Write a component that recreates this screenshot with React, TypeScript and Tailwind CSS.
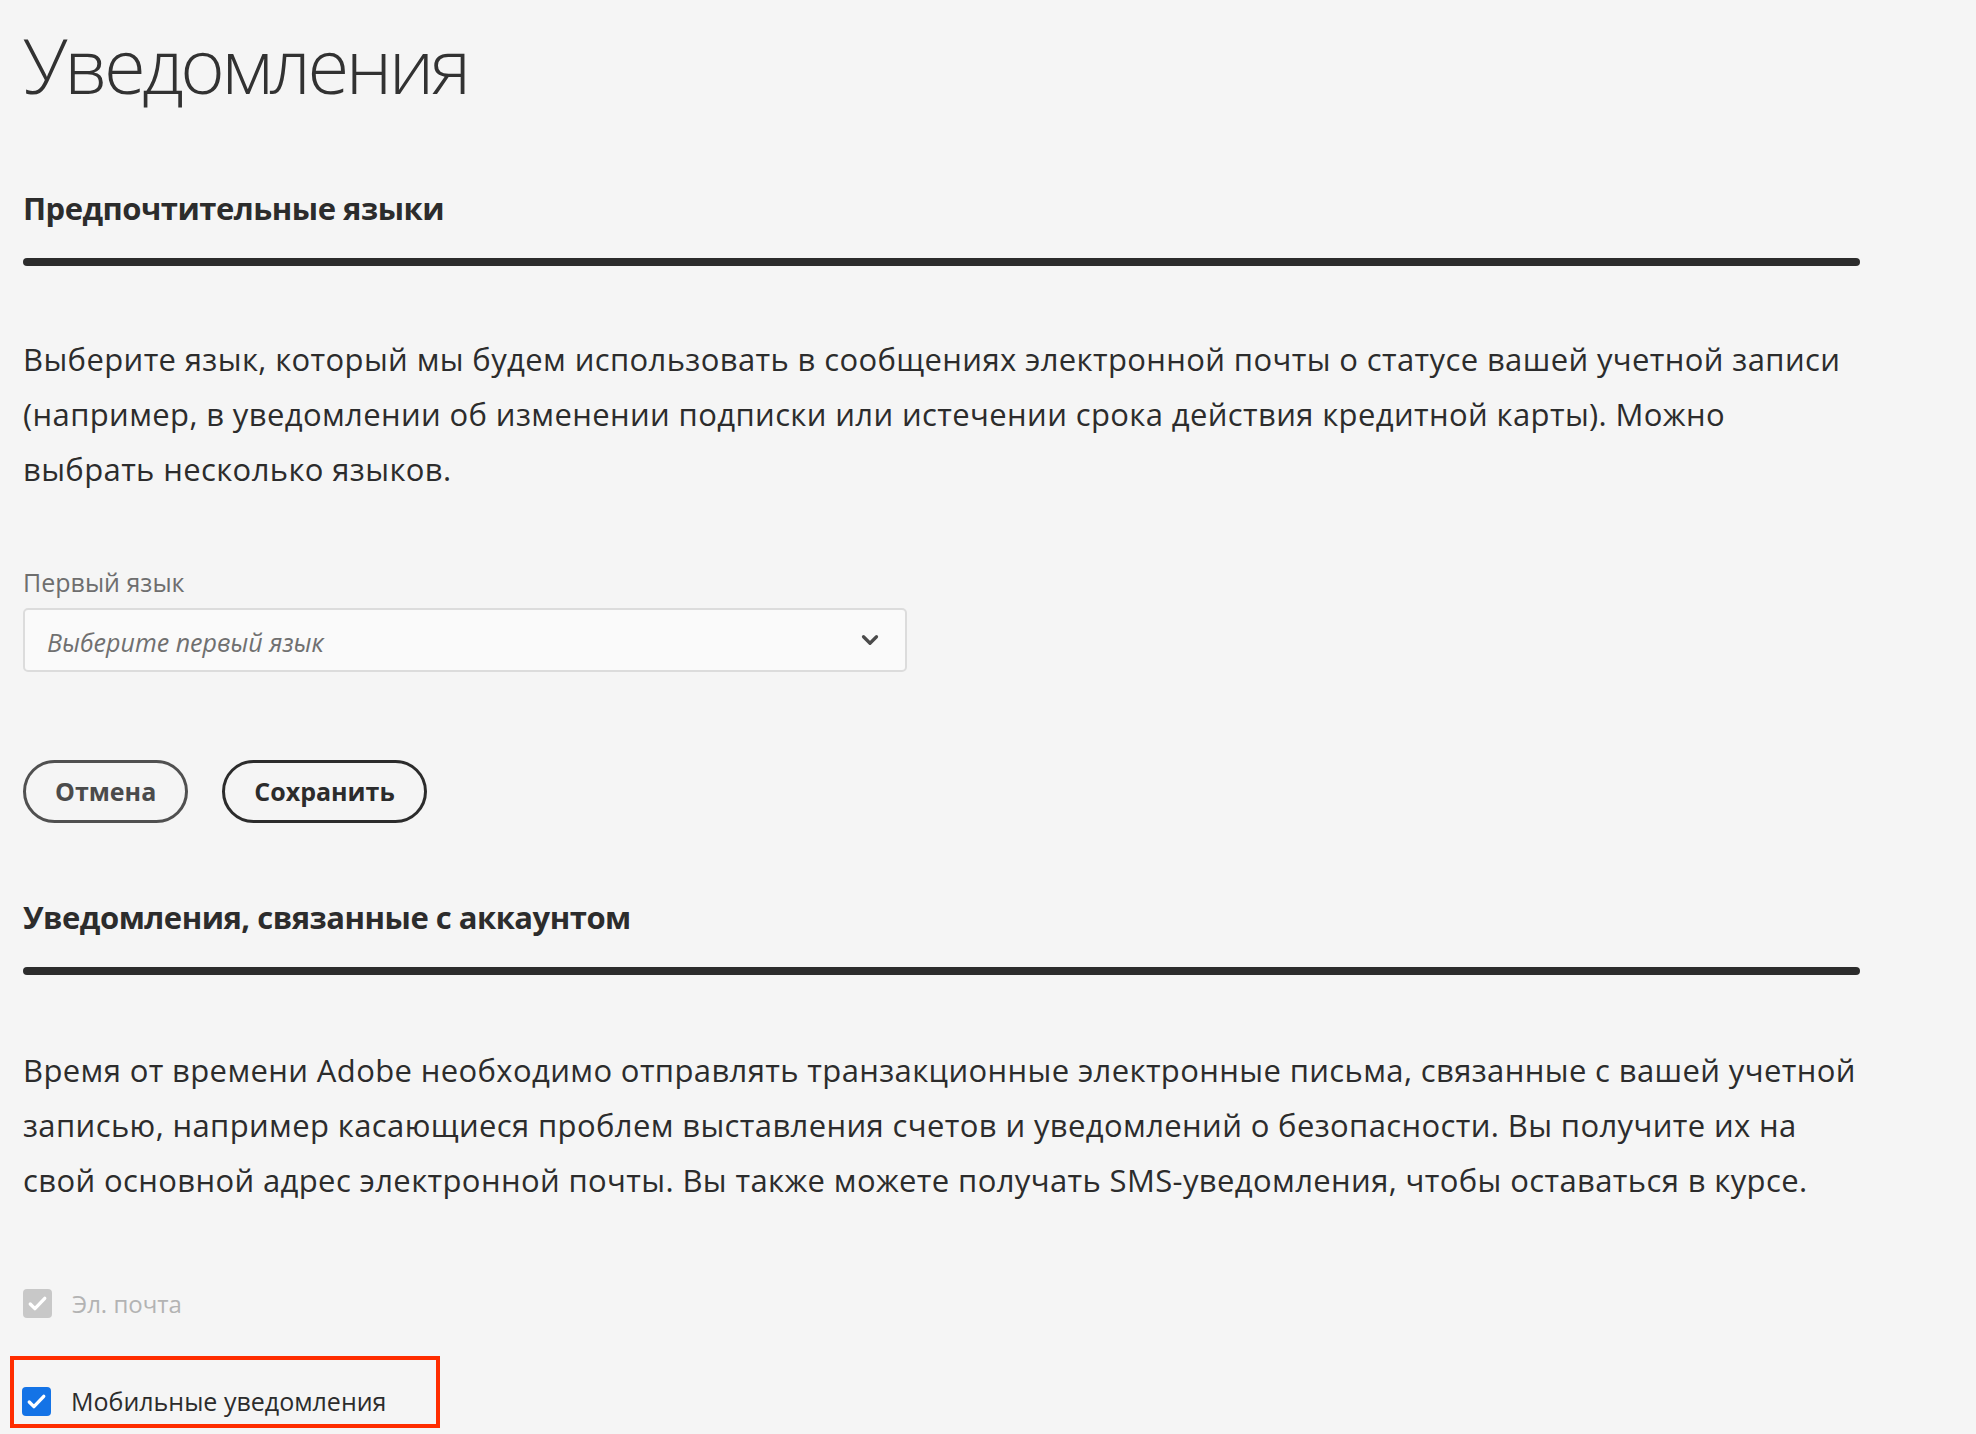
import { ChevronDown } from 'lucide-react';

const font = { fontFamily: '"Open Sans", "Noto Sans", sans-serif' };

function Check({ className }: { className?: string }) {
  return (
    <svg viewBox="0 0 28 28" className={className} fill="none">
      <path d="M7 14.5l4.5 4.5L21 9" stroke="white" strokeWidth="3.2" strokeLinecap="round" strokeLinejoin="round" />
    </svg>
  );
}

function Checkbox({
  checked,
  disabled,
  label,
  labelClass,
}: {
  checked: boolean;
  disabled?: boolean;
  label: string;
  labelClass: string;
}) {
  return (
    <label className="flex items-center h-[29px]">
      <span
        className={`w-[29px] h-[29px] rounded-[4px] flex items-center justify-center shrink-0 ${
          disabled ? 'bg-[#c8c8c8]' : 'bg-[#1473e6]'
        }`}
      >
        {checked && <Check className="w-[29px] h-[29px]" />}
      </span>
      <span className={`ml-[20px] leading-[29px] ${labelClass}`}>{label}</span>
    </label>
  );
}

function SectionHeading({ title }: { title: string }) {
  return (
    <>
      <h2 className="text-[31px] leading-[40px] font-bold tracking-[-0.5px] text-[#2c2c2c]">{title}</h2>
      <div className="mt-[30px] h-[8px] w-[1837px] rounded-full bg-[#2c2c2c]" />
    </>
  );
}

export default function App() {
  return (
    <div className="min-h-screen bg-[#f5f5f5] pl-[23px] pt-[26px] overflow-hidden" style={font}>
      <h1 className="text-[76px] leading-[78px] font-light tracking-[-3.4px] text-[#323232]">Уведомления</h1>

      <div className="mt-[84px]">
        <SectionHeading title="Предпочтительные языки" />
      </div>

      <p className="mt-[66px] text-[31px] leading-[55px] tracking-[0.38px] text-[#2c2c2c] whitespace-nowrap">
        Выберите язык, который мы будем использовать в сообщениях электронной почты о статусе вашей учетной записи
        <br />
        (например, в уведомлении об изменении подписки или истечении срока действия кредитной карты). Можно
        <br />
        выбрать несколько языков.
      </p>

      <div className="mt-[70px] text-[25px] leading-[30px] text-[#6e6e6e]">Первый язык</div>
      <button
        type="button"
        className="mt-[11px] w-[884px] h-[64px] flex items-center justify-between bg-[#fafafa] border-2 border-[#dcdcdc] rounded-[5px] pl-[22px] pr-[22px]"
      >
        <span className="italic text-[25px] leading-[30px] pt-[3px] text-[#707070]">Выберите первый язык</span>
        <ChevronDown size={26} strokeWidth={3} className="text-[#4b4b4b]" />
      </button>

      <div className="mt-[88px] flex gap-[34px]">
        <button
          type="button"
          className="h-[63px] px-[29px] rounded-full border-[3px] border-[#505050] text-[25px] font-bold text-[#4b4b4b]"
        >
          Отмена
        </button>
        <button
          type="button"
          className="h-[63px] px-[29px] rounded-full border-[3px] border-[#2c2c2c] text-[25px] font-bold text-[#2c2c2c]"
        >
          Сохранить
        </button>
      </div>

      <div className="mt-[74px]">
        <SectionHeading title="Уведомления, связанные с аккаунтом" />
      </div>

      <p className="mt-[68px] text-[31px] leading-[55px] tracking-[0.38px] text-[#2c2c2c] whitespace-nowrap">
        Время от времени Adobe необходимо отправлять транзакционные электронные письма, связанные с вашей учетной
        <br />
        записью, например касающиеся проблем выставления счетов и уведомлений о безопасности. Вы получите их на
        <br />
        свой основной адрес электронной почты. Вы также можете получать SMS-уведомления, чтобы оставаться в курсе.
      </p>

      <div className="mt-[81px]">
        <Checkbox checked disabled label="Эл. почта" labelClass="text-[24px] text-[#b3b3b3]" />
      </div>

      <div className="mt-[38px] -ml-[13px] w-[430px] border-4 border-[#ff2d00] pt-[27px] pb-[8px] pl-[8px]">
        <Checkbox checked label="Мобильные уведомления" labelClass="text-[25px] text-[#2c2c2c]" />
      </div>
    </div>
  );
}
